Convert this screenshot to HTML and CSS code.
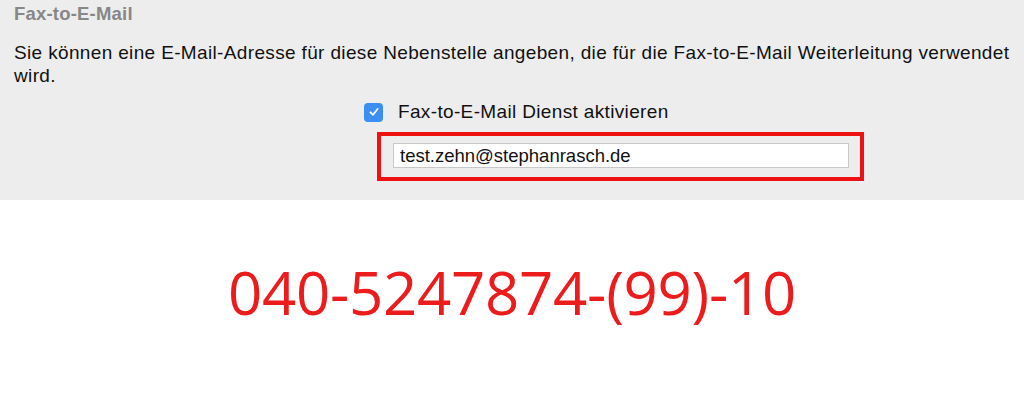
FILE: index.html
```html
<!DOCTYPE html>
<html>
<head>
  <meta charset="utf-8">
  <title>Fax-to-E-Mail</title>
  <link rel="stylesheet" href="styles.css">
</head>
<body>
  <div class="panel">
    <h2>Fax-to-E-Mail</h2>
    <p class="hint">Sie können eine E-Mail-Adresse für diese Nebenstelle angeben, die für die Fax-to-E-Mail Weiterleitung verwendet wird.</p>

    <div class="options">
      <label class="check">
        <span class="box">
          <svg width="12" height="12" viewBox="0 0 12 12"><path d="M2.5 6.3 L5 8.8 L9.6 3" fill="none" stroke="#fff" stroke-width="1.8" stroke-linecap="round" stroke-linejoin="round"/></svg>
        </span>
        Fax-to-E-Mail Dienst aktivieren
      </label>
      <div class="highlight">
        <input type="text" class="mail" value="test.zehn@stephanrasch.de">
      </div>
    </div>
  </div>

  <div class="number">040-5247874-(99)-10</div>
</body>
</html>
```

FILE: styles.css
```css
body {
  margin: 0;
  font-family: "Liberation Sans", Arial, sans-serif;
  background: #fff;
}

.panel {
  background: #ededed;
  height: 200px;
  padding: 3px 14px 0;
  box-sizing: border-box;
}

h2 {
  margin: 0;
  font-size: 18.5px;
  letter-spacing: 0.2px;
  line-height: 22px;
  color: #878787;
}

.hint {
  margin: 16px 0 0;
  font-size: 19px;
  letter-spacing: 0.35px;
  line-height: 23px;
  color: #111;
}

.options {
  margin: 14px 0 0 350px;
}

.check {
  display: flex;
  align-items: center;
  font-size: 19px;
  letter-spacing: 0.35px;
  color: #111;
  height: 22px;
}

.box {
  width: 19px;
  height: 19px;
  border-radius: 4px;
  background: #3b8ef2;
  display: flex;
  align-items: center;
  justify-content: center;
  margin-right: 15px;
}

.highlight {
  margin: 9px 0 0 13px;
  width: 487px;
  height: 49px;
  box-sizing: border-box;
  border: 4px solid #ee1111;
  padding: 7px 0 0 12px;
}

input.mail {
  display: block;
  width: 456px;
  height: 25px;
  box-sizing: border-box;
  border: 1px solid #c8c8c8;
  background: #fff;
  padding: 0 6px;
  font-family: "Liberation Sans", Arial, sans-serif;
  font-size: 18.5px;
  color: #111;
  outline: none;
}

.number {
  margin-top: 52px;
  text-align: center;
  font-family: "Open Sans", sans-serif;
  font-size: 60px;
  line-height: 80px;
  color: #ec1c1c;
  letter-spacing: -0.3px;
}
```
